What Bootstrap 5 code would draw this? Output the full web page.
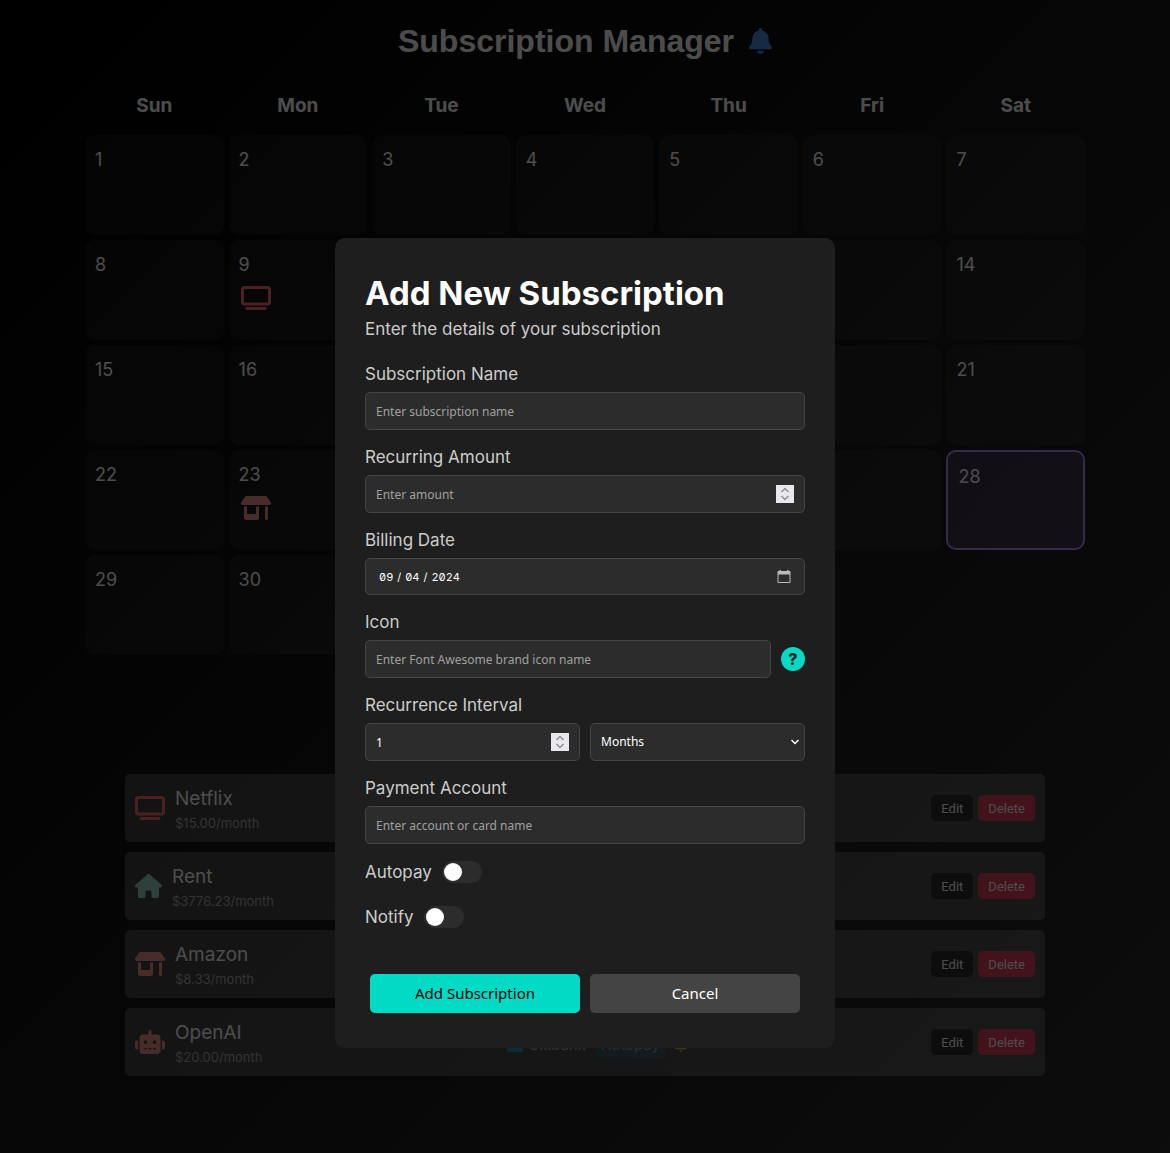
<!DOCTYPE html>
<html lang="en">
<head>
<meta charset="utf-8">
<meta name="viewport" content="width=device-width, initial-scale=1">
<title>Subscription Manager</title>
<link href="https://cdn.jsdelivr.net/npm/bootstrap@5.3.0/dist/css/bootstrap.min.css" rel="stylesheet">
<style>
body{min-height:100vh;background:linear-gradient(135deg,#000,#2c2c2c) no-repeat;color:#fff;font-family:Inter,"Open Sans",sans-serif;padding:20px}
svg{fill:currentColor;display:block;flex:none}
.page-title{font:bold 32px/42px "Liberation Sans",Arial,sans-serif;margin-bottom:28px;gap:15px}
.bell-btn{color:#4a90e2;background:none;border:0;padding:0}
.calendar{max-width:1000px;display:grid;grid-template-columns:repeat(7,1fr);gap:5px}
.weekday{font-size:19px;font-weight:700;line-height:32px;text-align:center;margin-bottom:8px}
.day{height:100px;border-radius:10px;background:rgba(255,255,255,.05);padding:10px;font-size:18px;line-height:30px}
.day svg{margin:6px 2px}
.day.today{border:2px solid #bb86fc;background:rgba(187,134,252,.2)}
.subs{max-width:920px;margin-top:119px;gap:10px}
.gap-10{gap:10px}
.gap-5px{gap:5px}
.sub-item{height:68px;border-radius:5px;background:rgba(255,255,255,.2);padding:10px}
.sub-name{font-size:19px;line-height:30px}
.sub-price{font-size:13px;line-height:18px;color:#aaa}
.btn-mini{font:13px/16px Roboto,sans-serif;color:#fff;border:0;border-radius:5px;padding:6px 10px 4px;background:#2c2c2c}
.btn-mini.del{background:#e0405a}
.c-red{color:#ff6b6b}.c-green{color:#98d8c8}.c-pink{color:#f1948a}
.pay-info{font-size:15px;line-height:24px;color:#aaa;gap:10px;padding-top:6px}
.pay-tag{background:rgba(0,150,190,.2);color:#7f9fae;border-radius:4px;padding:1px 5px}
.overlay{background:rgba(0,0,0,.7);padding-top:238px}
.sub-dialog{max-width:500px;margin:0 auto}
.sub-panel{background:#1e1e1e;border:0;border-radius:10px;padding:30px;color:#fff}
.panel-title{font-size:33px;font-weight:700;line-height:50px;margin:0}
.panel-text{font-size:17px;line-height:22px;color:#ccc;margin-bottom:22px}
.field-label{display:block;font-size:17px;line-height:24px;color:#ccc;margin-bottom:6px}
.field{margin-bottom:15px}
.field-box{width:100%;height:38px;background:#2c2c2c;border:1px solid #444;border-radius:5px;color:#fff;padding:0 10px;font:12px/16px "Noto Sans",sans-serif;appearance:none}
.field-box::placeholder{color:#a0a0a0;opacity:1}
.field-box[type=number]{appearance:textfield}
.field-box[type=number]::-webkit-inner-spin-button{display:none}
.date-box{height:37px;padding-left:13px;font:11px/16px Inter,sans-serif;font-feature-settings:"zero","tnum"}
.date-box::-webkit-datetime-edit-text{padding:0 4px}
.date-box::-webkit-calendar-picker-indicator{opacity:0}
.over-icon{position:absolute;top:50%;right:11px;transform:translateY(-50%);pointer-events:none}
.spin{width:18px;height:18px;background:#e9e9ed;color:#8f8f9d}
.line-icon{fill:none;stroke:currentColor;stroke-width:1.5}
.cal-icon{right:14px;color:#bbb}
.arrow-icon{right:5px}
.help-btn{width:24px;height:24px;border:0;border-radius:50%;background:#03dac6;color:#1e1e1e;font-weight:800;font-size:16px;line-height:24px;padding:0}
.switch-row{height:25px;margin-bottom:20px;gap:10px;color:#ccc;font-size:17px;line-height:24px}
.toggle{appearance:none;width:40px;height:22px;border-radius:11px;background:#2c2c2c;padding:2px;margin:0}
.toggle::before{content:"";display:block;width:18px;height:18px;border-radius:50%;background:#fff}
.toggle:checked{background:#03dac6}
.toggle:checked::before{margin-left:auto}
.actions{margin:45px 5px 5px;gap:10px}
.action-btn{flex:1;border:0;border-radius:5px;background:#444;color:#fff;font:15px/19px "Noto Sans",sans-serif;padding:10px}
.action-btn.main{background:#03dac6;color:#000}
</style>
</head>
<body>
<svg width="0" height="0" class="position-absolute" aria-hidden="true">
<symbol id="tv" viewBox="0 0 640 512"><path d="M64 64V352H576V64H64zM0 64C0 28.7 28.7 0 64 0H576c35.3 0 64 28.7 64 64V352c0 35.3-28.7 64-64 64H64c-35.3 0-64-28.7-64-64V64zM128 448H512c17.7 0 32 14.3 32 32s-14.3 32-32 32H128c-17.7 0-32-14.3-32-32s14.3-32 32-32z"/></symbol>
<symbol id="shop" viewBox="0 0 640 512"><path d="M36.8 192H603.2c20.3 0 36.8-16.5 36.8-36.8c0-7.3-2.2-14.4-6.2-20.4L558.2 21.4C549.3 8 534.4 0 518.3 0H121.7c-16 0-31 8-39.9 21.4L6.2 134.7c-4 6.1-6.2 13.2-6.2 20.4C0 175.5 16.5 192 36.8 192zM64 224V384v80c0 26.5 21.5 48 48 48H336c26.5 0 48-21.5 48-48V384 224H320V384H128V224H64zm448 0V480c0 17.7 14.3 32 32 32s32-14.3 32-32V224H512z"/></symbol>
<symbol id="house" viewBox="0 0 576 512"><path d="M575.8 255.5c0 18-15 32.1-32 32.1h-32l.7 160.2c0 2.7-.2 5.4-.5 8.1V472c0 22.1-17.9 40-40 40H456c-1.1 0-2.2 0-3.3-.1c-1.4 .1-2.8 .1-4.2 .1H416 392c-22.1 0-40-17.9-40-40V448 384c0-17.7-14.3-32-32-32H256c-17.7 0-32 14.3-32 32v64 24c0 22.1-17.9 40-40 40H160 128.1c-1.5 0-3-.1-4.5-.2c-1.2 .1-2.4 .2-3.6 .2H104c-22.1 0-40-17.9-40-40V360c0-.9 0-1.9 .1-2.8V287.6H32c-18 0-32-14-32-32.1c0-9 3-17 10-24L266.4 8c7-7 15-8 22-8s15 2 21 7L564.8 231.5c8 7 12 15 11 24z"/></symbol>
<symbol id="robot" viewBox="0 0 640 512"><path d="M320 0c17.7 0 32 14.3 32 32V96H472c39.8 0 72 32.2 72 72V440c0 39.8-32.2 72-72 72H168c-39.8 0-72-32.2-72-72V168c0-39.8 32.2-72 72-72H288V32c0-17.7 14.3-32 32-32zM208 384c-8.8 0-16 7.2-16 16s7.2 16 16 16h32c8.8 0 16-7.2 16-16s-7.2-16-16-16H208zm96 0c-8.8 0-16 7.2-16 16s7.2 16 16 16h32c8.8 0 16-7.2 16-16s-7.2-16-16-16H304zm96 0c-8.8 0-16 7.2-16 16s7.2 16 16 16h32c8.8 0 16-7.2 16-16s-7.2-16-16-16H400zM264 256a40 40 0 1 0 -80 0 40 40 0 1 0 80 0zm152 40a40 40 0 1 0 0-80 40 40 0 1 0 0 80zM48 224H64V416H48c-26.5 0-48-21.5-48-48V272c0-26.5 21.5-48 48-48zm544 0c26.5 0 48 21.5 48 48v96c0 26.5-21.5 48-48 48H576V224h16z"/></symbol>
<symbol id="bell" viewBox="0 0 448 512"><path d="M224 0c-17.7 0-32 14.3-32 32V51.2C119 66 64 130.6 64 208v18.8c0 47-17.3 92.4-48.5 127.6l-7.4 8.3c-8.4 9.4-10.4 22.9-5.3 34.4S19.4 416 32 416H416c12.6 0 24-7.4 29.2-18.9s3.1-25-5.3-34.4l-7.4-8.3C401.3 319.2 384 273.9 384 226.8V208c0-77.4-55-142-128-156.8V32c0-17.7-14.3-32-32-32zm45.3 493.3c12-12 18.7-28.3 18.7-45.3H224 160c0 17 6.7 33.3 18.7 45.3s28.3 18.7 45.3 18.7s33.3-6.7 45.3-18.7z"/></symbol>
<symbol id="updown" viewBox="0 0 18 18"><path d="M5.500 7L9 3.500 12.500 7M5.500 11L9 14.500 12.500 11"/></symbol>
</svg>

<h1 class="page-title d-flex justify-content-center align-items-center"><span>Subscription Manager</span><button class="bell-btn" aria-label="Notifications"><svg width="23" height="26"><use href="#bell"/></svg></button></h1>

<main>
<div class="calendar mx-auto">
<div class="weekday">Sun</div><div class="weekday">Mon</div><div class="weekday">Tue</div><div class="weekday">Wed</div><div class="weekday">Thu</div><div class="weekday">Fri</div><div class="weekday">Sat</div>
<div class="day">1</div><div class="day">2</div><div class="day">3</div><div class="day">4</div><div class="day">5</div><div class="day">6</div><div class="day">7</div>
<div class="day">8</div><div class="day">9<svg class="c-red" width="30" height="24"><use href="#tv"/></svg></div><div class="day">10</div><div class="day">11</div><div class="day">12</div><div class="day">13</div><div class="day">14</div>
<div class="day">15</div><div class="day">16</div><div class="day">17</div><div class="day">18</div><div class="day">19</div><div class="day">20</div><div class="day">21</div>
<div class="day">22</div><div class="day">23<svg class="c-pink" width="30" height="24"><use href="#shop"/></svg></div><div class="day">24</div><div class="day">25</div><div class="day">26</div><div class="day">27</div><div class="day today">28</div>
<div class="day">29</div><div class="day">30</div>
</div>

<div class="subs mx-auto d-flex flex-column">
<div class="sub-item d-flex align-items-center justify-content-between"><div class="d-flex align-items-center gap-10"><svg class="c-red" width="30" height="24"><use href="#tv"/></svg><div><div class="sub-name">Netflix</div><div class="sub-price">$15.00/month</div></div></div><div class="d-flex gap-5px"><button class="btn-mini">Edit</button><button class="btn-mini del">Delete</button></div></div>
<div class="sub-item d-flex align-items-center justify-content-between"><div class="d-flex align-items-center gap-10"><svg class="c-green" width="27" height="24"><use href="#house"/></svg><div><div class="sub-name">Rent</div><div class="sub-price">$3776.23/month</div></div></div><div class="d-flex gap-5px"><button class="btn-mini">Edit</button><button class="btn-mini del">Delete</button></div></div>
<div class="sub-item d-flex align-items-center justify-content-between"><div class="d-flex align-items-center gap-10"><svg class="c-pink" width="30" height="24"><use href="#shop"/></svg><div><div class="sub-name">Amazon</div><div class="sub-price">$8.33/month</div></div></div><div class="d-flex gap-5px"><button class="btn-mini">Edit</button><button class="btn-mini del">Delete</button></div></div>
<div class="sub-item d-flex align-items-center justify-content-between"><div class="d-flex align-items-center gap-10"><svg class="c-pink" width="30" height="24"><use href="#robot"/></svg><div><div class="sub-name">OpenAI</div><div class="sub-price">$20.00/month</div></div></div>
<div class="pay-info d-flex align-items-center"><span class="d-flex align-items-center gap-5px"><svg width="16" height="14" viewBox="0 0 16 14" color="#2696b8"><path fill-rule="evenodd" d="M2 0H14Q16 0 16 2V12Q16 14 14 14H2Q0 14 0 12V2Q0 0 2 0ZM0 3.500V6H16V3.500Z"/></svg>Citibank</span><span class="pay-tag">Autopay</span><svg width="12" height="14" color="#c8c020"><use href="#bell"/></svg></div>
<div class="d-flex gap-5px"><button class="btn-mini">Edit</button><button class="btn-mini del">Delete</button></div></div>
</div>
</main>

<div class="modal d-block overlay" role="dialog" aria-labelledby="panelTitle">
<div class="modal-dialog sub-dialog">
<form class="modal-content sub-panel">
<h2 class="panel-title" id="panelTitle">Add New Subscription</h2>
<p class="panel-text">Enter the details of your subscription</p>
<div class="field"><label class="field-label" for="fName">Subscription Name</label><input class="field-box" id="fName" type="text" placeholder="Enter subscription name"></div>
<div class="field"><label class="field-label" for="fAmount">Recurring Amount</label><div class="d-flex position-relative"><input class="field-box" id="fAmount" type="number" placeholder="Enter amount"><svg class="over-icon spin line-icon"><use href="#updown"/></svg></div></div>
<div class="field"><label class="field-label" for="fDate">Billing Date</label><div class="d-flex position-relative"><input class="field-box date-box" id="fDate" type="date" value="2024-09-04"><svg class="over-icon cal-icon" width="14" height="14" viewBox="0 0 14 14"><path fill-rule="evenodd" d="M2.500 0H4V1H10V0H11.500V1H12.500Q13.500 1 13.500 2V12Q13.500 13 12.500 13H1.500Q.5 13 .5 12V2Q.5 1 1.500 1H2.500ZM1.500 4.500V12H12.500V4.500Z"/></svg></div></div>
<div class="field"><label class="field-label" for="fIcon">Icon</label><div class="d-flex align-items-center gap-10"><input class="field-box" id="fIcon" type="text" placeholder="Enter Font Awesome brand icon name"><button type="button" class="help-btn flex-shrink-0" aria-label="Icon help"><span>?</span></button></div></div>
<div class="field"><label class="field-label" for="fEvery">Recurrence Interval</label><div class="d-flex gap-10"><div class="position-relative d-flex w-50"><input class="field-box" id="fEvery" type="number" value="1"><svg class="over-icon spin line-icon"><use href="#updown"/></svg></div><div class="position-relative d-flex w-50"><select class="field-box" aria-label="Interval unit"><option>Months</option><option>Weeks</option><option>Years</option></select><svg class="over-icon arrow-icon line-icon" width="10" height="10" viewBox="0 0 10 10"><path d="M1.500 3L5 6.500 8.500 3"/></svg></div></div></div>
<div class="field"><label class="field-label" for="fAccount">Payment Account</label><input class="field-box" id="fAccount" type="text" placeholder="Enter account or card name"></div>
<div class="switch-row d-flex align-items-center"><label for="fAuto">Autopay</label><input class="toggle" id="fAuto" type="checkbox" role="switch"></div>
<div class="switch-row d-flex align-items-center mb-0"><label for="fNotify">Notify</label><input class="toggle" id="fNotify" type="checkbox" role="switch"></div>
<div class="actions d-flex"><button type="submit" class="action-btn main">Add Subscription</button><button type="button" class="action-btn">Cancel</button></div>
</form>
</div>
</div>
<script src="https://cdn.jsdelivr.net/npm/bootstrap@5.3.0/dist/js/bootstrap.bundle.min.js"></script>
</body>
</html>
